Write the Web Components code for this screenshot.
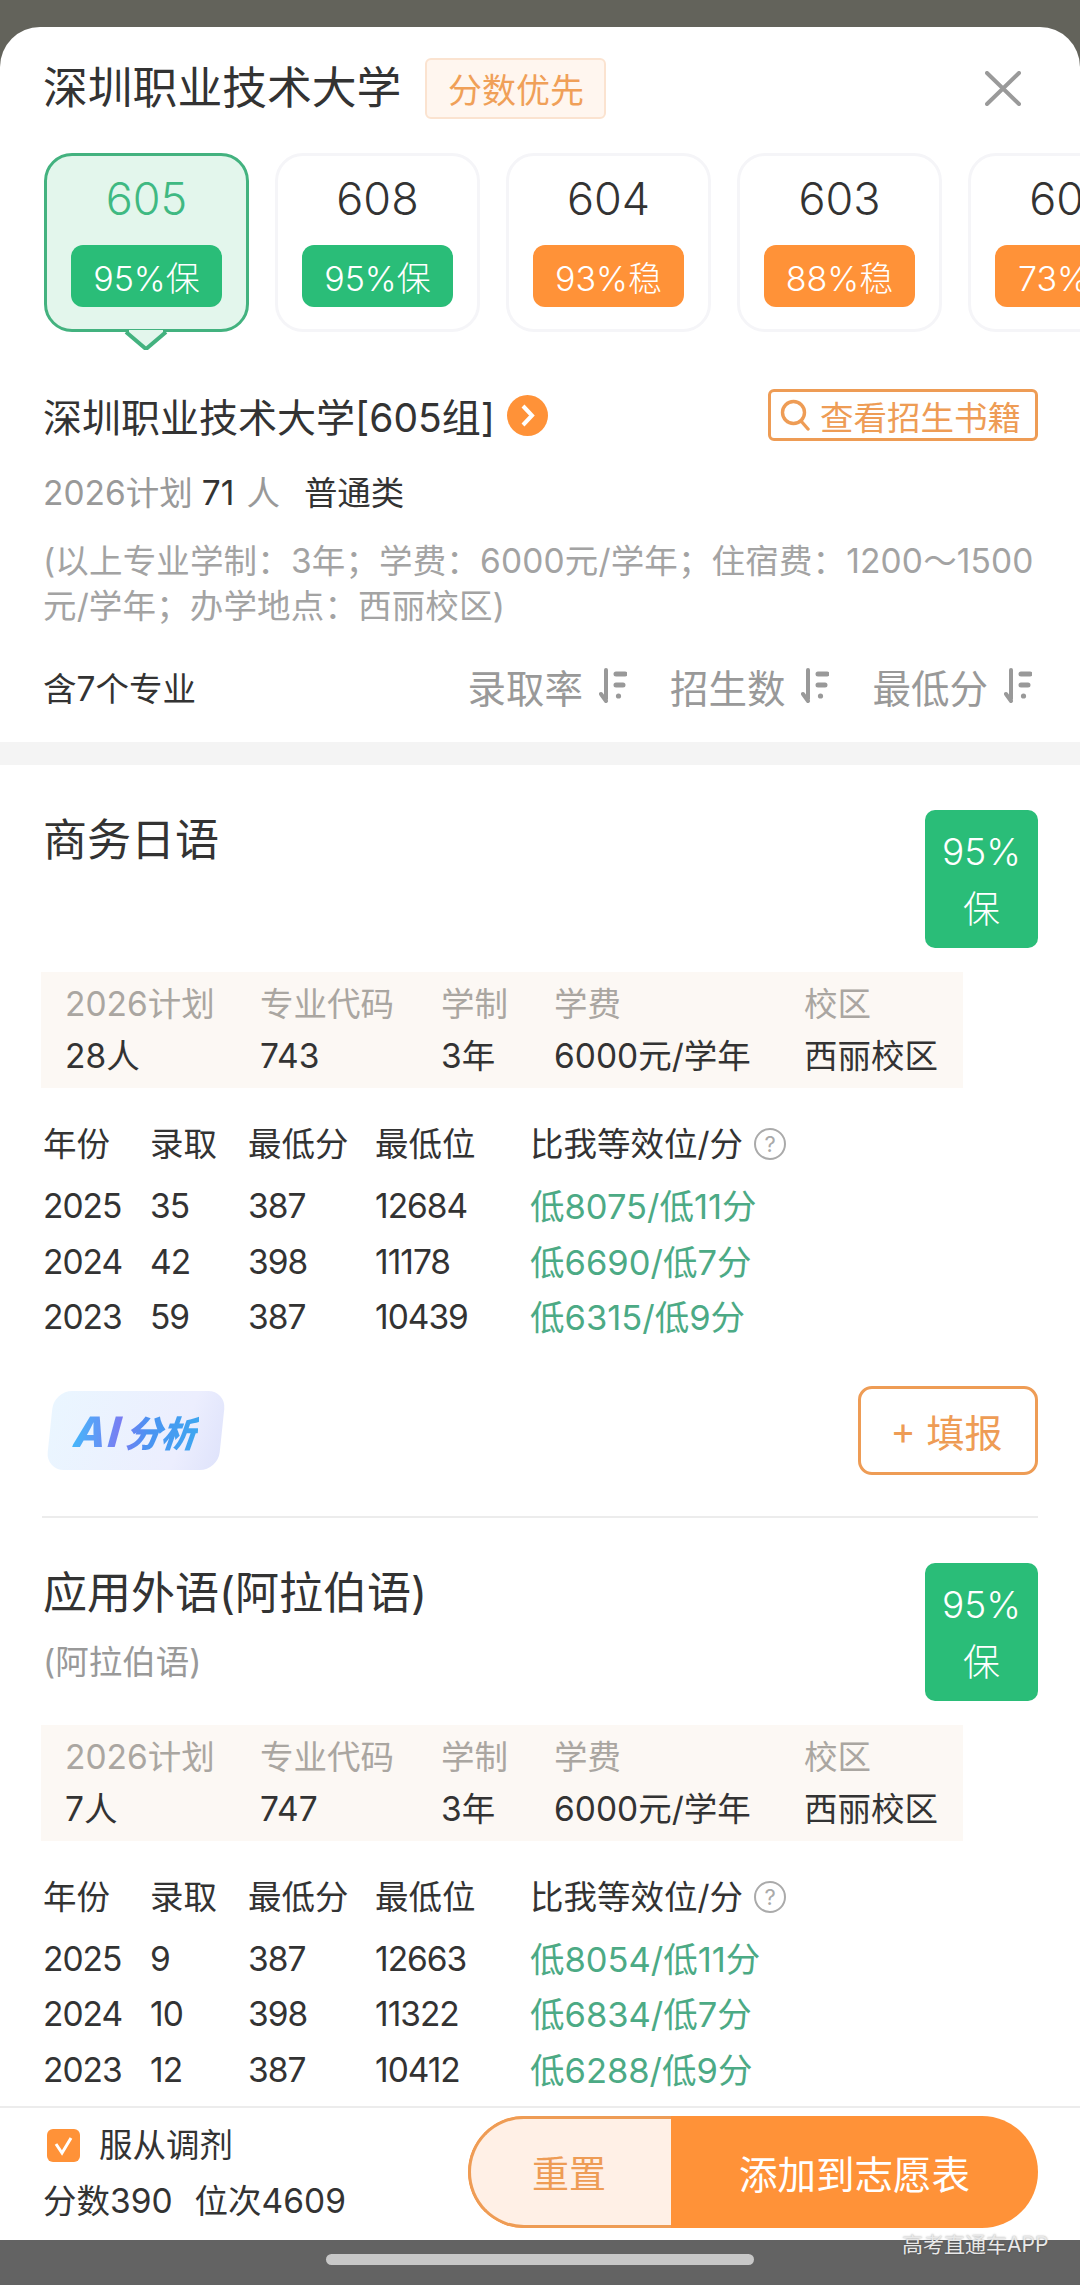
<!DOCTYPE html>
<html lang="zh-CN">
<head>
<meta charset="utf-8">
<title>深圳职业技术大学</title>
<style>
    html, body {
        margin: 0;
        width: 1080px;
        height: 2285px;
        overflow: hidden;
        background: #63635b;
        color: #333;
        font-family: Inter, "Noto Sans CJK SC", sans-serif;
    }
</style>
</head>
<body>

<major-sheet>
    <sheet-header slot="header" title="深圳职业技术大学" tag="分数优先"></sheet-header>

    <score-strip slot="header">
        <score-card score="605" pill="95%保" tone="green" selected></score-card>
        <score-card score="608" pill="95%保" tone="green"></score-card>
        <score-card score="604" pill="93%稳" tone="orange"></score-card>
        <score-card score="603" pill="88%稳" tone="orange"></score-card>
        <score-card score="602" pill="73%稳" tone="orange"></score-card>
    </score-strip>

    <group-summary slot="header"></group-summary>

    <major-card name="商务日语" badge="95%" kind="保" actions>
        <info-cell label="2026计划" value="28人"></info-cell>
        <info-cell label="专业代码" value="743"></info-cell>
        <info-cell label="学制" value="3年"></info-cell>
        <info-cell label="学费" value="6000元/学年"></info-cell>
        <info-cell label="校区" value="西丽校区"></info-cell>
        <score-row slot="rows" cells="2025|35|387|12684|低8075/低11分"></score-row>
        <score-row slot="rows" cells="2024|42|398|11178|低6690/低7分"></score-row>
        <score-row slot="rows" cells="2023|59|387|10439|低6315/低9分"></score-row>
    </major-card>

    <major-card name="应用外语(阿拉伯语)" sub="(阿拉伯语)" badge="95%" kind="保">
        <info-cell label="2026计划" value="7人"></info-cell>
        <info-cell label="专业代码" value="747"></info-cell>
        <info-cell label="学制" value="3年"></info-cell>
        <info-cell label="学费" value="6000元/学年"></info-cell>
        <info-cell label="校区" value="西丽校区"></info-cell>
        <score-row slot="rows" cells="2025|9|387|12663|低8054/低11分"></score-row>
        <score-row slot="rows" cells="2024|10|398|11322|低6834/低7分"></score-row>
        <score-row slot="rows" cells="2023|12|387|10412|低6288/低9分"></score-row>
    </major-card>

    <sheet-footer slot="footer"></sheet-footer>
</major-sheet>

<script>
    (function (customElements) {
        'use strict'

        // base class, every element only has to give its html
        class ShadowElement extends HTMLElement {
            constructor() {
                super();
                this.attachShadow({ mode: 'open' });
            }
            connectedCallback() {
                this.shadowRoot.innerHTML = this.render();
            }
            attr(name) {
                return this.getAttribute(name) || '';
            }
        }

        class MajorSheet extends ShadowElement {
            render() {
                return `
                <style>
                    :host { display: flex; flex-direction: column; height: 2285px; padding-top: 27px; box-sizing: border-box; position: relative; }
                    .panel { flex: 1; min-height: 0; display: flex; flex-direction: column; background: #fff; border-radius: 40px 40px 0 0; overflow: hidden; }
                    .head { flex: none; }
                    .gap { flex: none; height: 23px; background: #f4f4f4; }
                    .list { flex: 1; min-height: 0; overflow: hidden; }
                    .nav { flex: none; height: 45px; background: #636363; display: flex; align-items: center; justify-content: center; }
                    .handle { width: 428px; height: 11px; margin-top: -6px; border-radius: 6px; background: #c8c8c8; }
                    .mark { position: absolute; left: 902px; top: 2231px; font-size: 21px; line-height: 28px; color: #e8e8e8; text-shadow: 0 0 2px rgba(0,0,0,.35); }
                </style>
                <div class="panel">
                    <div class="head"><slot name="header"></slot></div>
                    <div class="gap"></div>
                    <div class="list"><slot></slot></div>
                    <slot name="footer"></slot>
                </div>
                <div class="nav"><div class="handle"></div></div>
                <div class="mark">高考直通车APP</div>
                `;
            }
        }

        class SheetHeader extends ShadowElement {
            render() {
                return `
                <style>
                    :host { display: flex; align-items: center; height: 61px; padding: 31px 59px 0 43px; }
                    h1 { margin: 0; font-size: 44.8px; font-weight: 400; line-height: 61px; color: #333; }
                    .tag { margin-left: 24px; width: 181px; height: 61px; box-sizing: border-box; display: flex; align-items: center; justify-content: center; font-size: 34px; color: #f0a058; background: #fff6ef; border: 2px solid #fbe3d0; border-radius: 6px; }
                    svg { margin-left: auto; display: block; }
                </style>
                <h1>${this.attr('title')}</h1>
                <div class="tag">${this.attr('tag')}</div>
                <svg width="36" height="35" viewBox="0 0 36 35"><path d="M2 2 34 33M34 2 2 33" stroke="#9a9a9a" stroke-width="4" stroke-linecap="round" fill="none"/></svg>
                `;
            }
        }

        class ScoreStrip extends ShadowElement {
            render() {
                return `
                <style>
                    :host { display: flex; gap: 26px; margin-top: 34px; padding-left: 44px; height: 197px; overflow: hidden; }
                </style>
                <slot></slot>
                `;
            }
        }

        class ScoreCard extends ShadowElement {
            render() {
                const selected = this.hasAttribute('selected');
                const arrow = selected ? `<svg class="arrow" width="44" height="22" viewBox="0 0 44 22"><path d="M2 2 22 19 42 2" fill="#e3f6ec" stroke="#43b27f" stroke-width="4"/><path d="M5 0H39V2H5Z" fill="#e3f6ec"/></svg>` : '';
                return `
                <style>
                    :host { flex: none; display: block; position: relative; width: 205px; height: 179px; box-sizing: border-box; }
                    .box { height: 100%; box-sizing: border-box; display: flex; flex-direction: column; align-items: center; padding-top: 15px; border: 3px solid #f5f5f8; border-radius: 28px; background: #fff; }
                    .sel { border-color: #43b27f; background: #e3f6ec; }
                    .score { font-size: 45px; line-height: 56px; font-weight: 300; color: #333; }
                    .sel .score { color: #3fb982; }
                    .pill { margin-top: 18px; width: 151px; height: 62px; display: flex; align-items: center; justify-content: center; border-radius: 12px; font-size: 34px; font-weight: 300; color: #fff; }
                    .green { background: #2abd78; }
                    .orange { background: #ff9238; }
                    .arrow { position: absolute; left: 80px; top: 177px; display: block; }
                </style>
                <div class="box ${selected ? 'sel' : ''}">
                    <div class="score">${this.attr('score')}</div>
                    <div class="pill ${this.attr('tone')}">${this.attr('pill')}</div>
                </div>
                ${arrow}
                `;
            }
        }

        class SortItem extends ShadowElement {
            render() {
                return `
                <style>
                    :host { display: flex; align-items: center; gap: 16px; font-size: 38.5px; color: #999; }
                    svg { display: block; }
                </style>
                <span>${this.attr('label')}</span>
                <svg width="28" height="36" viewBox="0 0 28 36" fill="none" stroke="#999" stroke-linecap="round">
                    <path d="M7 2V31M2 26 7 33" stroke-width="4"/>
                    <path d="M17 6H26M17 17H24" stroke-width="5"/>
                    <circle cx="19.5" cy="28" r="2.6" fill="#999" stroke="none"/>
                </svg>
                `;
            }
        }

        class GroupSummary extends ShadowElement {
            render() {
                return `
                <style>
                    :host { display: block; padding: 39px 42px 26px 43px; font-size: 33.5px; }
                    .title { display: flex; align-items: center; height: 52px; }
                    .title b { font-size: 39px; font-weight: 400; color: #333; }
                    .go { margin-left: 12px; }
                    .book { margin-left: auto; width: 270px; height: 52px; box-sizing: border-box; display: flex; align-items: center; gap: 10px; padding-left: 9px; border: 3px solid #ee9c55; border-radius: 6px; font-size: 33.5px; color: #ee9c55; white-space: nowrap; }
                    svg { display: block; flex: none; }
                    .plan { margin-top: 30px; line-height: 44px; color: #999; display: flex; }
                    .plan em { font-style: normal; color: #333; margin: 0 12px 0 9px; }
                    .plan i { font-style: normal; color: #333; margin-left: 24px; }
                    .note { margin-top: 24px; width: 1000px; letter-spacing: .15px; line-height: 45px; color: #a3a3a3; }
                    .sort { margin-top: 27px; height: 60px; padding-right: 6px; display: flex; align-items: center; }
                    .sort span { color: #333; }
                    .sort sort-item:first-of-type { margin-left: auto; }
                    .sort sort-item + sort-item { margin-left: 43px; }
                </style>
                <div class="title">
                    <b>深圳职业技术大学[605组]</b>
                    <svg class="go" width="41" height="41" viewBox="0 0 41 41"><circle cx="20.5" cy="20.5" r="20.5" fill="#ff9238"/><path d="M16 11 25 20.5 16 30" fill="none" stroke="#fff" stroke-width="4"/></svg>
                    <div class="book">
                        <svg width="30" height="32" viewBox="0 0 30 32" fill="none" stroke="#ee9c55" stroke-width="3.4"><circle cx="13.5" cy="13.5" r="11"/><path d="M21 22 28 30" stroke-linecap="round"/></svg>
                        <span>查看招生书籍</span>
                    </div>
                </div>
                <div class="plan">2026计划<em>71</em>人<i>普通类</i></div>
                <div class="note">(以上专业学制：3年；学费：6000元/学年；住宿费：1200～1500元/学年；办学地点：西丽校区)</div>
                <div class="sort">
                    <span>含7个专业</span>
                    <sort-item label="录取率"></sort-item>
                    <sort-item label="招生数"></sort-item>
                    <sort-item label="最低分"></sort-item>
                </div>
                `;
            }
        }

        class InfoCell extends ShadowElement {
            render() {
                return `
                <style>
                    :host { display: block; font-size: 33.5px; line-height: 52px; white-space: nowrap; }
                    .l { color: #aaa6a1; }
                    .v { color: #333; }
                </style>
                <div class="l">${this.attr('label')}</div>
                <div class="v">${this.attr('value')}</div>
                `;
            }
        }

        class ScoreRow extends ShadowElement {
            render() {
                const cells = this.attr('cells').split('|');
                return `
                <style>
                    :host { display: grid; grid-template-columns: 107px 98px 127px 155px 1fr; font-size: 33.5px; line-height: 55.5px; color: #333; white-space: nowrap; }
                    div { letter-spacing: -1px; }
                    .low { color: #4caa85; font-size: 34.5px; letter-spacing: 0; }
                </style>
                ${cells.map((c, i) => `<div class="${i === 4 ? 'low' : ''}">${c}</div>`).join('')}
                `;
            }
        }

        class MajorCard extends ShadowElement {
            render() {
                const sub = this.attr('sub');
                const actions = this.hasAttribute('actions') ? `
                <div class="acts">
                    <div class="ai"><span><big>AI</big>分析</span></div>
                    <div class="add"><span>+</span><span>填报</span></div>
                </div>` : '';
                return `
                <style>
                    :host { display: block; margin: 0 42px; padding-top: 45px; }
                    .top { display: flex; justify-content: space-between; height: 138px; padding-left: 1px; }
                    h2 { margin: 0; font-size: 44px; font-weight: 400; line-height: 60px; color: #333; }
                    .sub { margin-top: 19px; font-size: 33.5px; line-height: 40px; color: #999; }
                    .badge { width: 113px; height: 138px; padding-top: 13px; box-sizing: border-box; border-radius: 10px; background: #2abd78; color: #fff; font-size: 37px; font-weight: 300; line-height: 58px; text-align: center; }
                    .info { margin: 24px 75px 0 -1px; padding: 6px 0 6px 24px; display: grid; grid-template-columns: 195px 181px 113px 250px 1fr; background: #fcf8f4; }
                    .rows { margin-top: 28px; padding-left: 1px; }
                    .th { display: grid; grid-template-columns: 107px 98px 127px 155px 1fr; font-size: 33.5px; line-height: 56px; color: #333; margin-bottom: 7px; white-space: nowrap; }
                    .th div:last-child { display: flex; align-items: center; gap: 11px; }
                    .q { width: 32px; height: 32px; box-sizing: border-box; border: 2px solid #aaa; border-radius: 50%; display: flex; align-items: center; justify-content: center; font-size: 22px; line-height: 1; color: #aaa; }
                    .acts { margin-top: 40px; padding: 0 0 41px 6px; display: flex; justify-content: space-between; align-items: center; border-bottom: 2px solid #ececec; }
                    .ai { width: 172px; height: 79px; margin-left: 2px; display: flex; align-items: center; justify-content: center; border-radius: 18px; transform: skewX(-6deg); background: linear-gradient(105deg, #eaf6ff, #eceefe 75%, #dfe3fb); }
                    .ai span { font-size: 36px; font-weight: 800; font-style: italic; white-space: nowrap; color: transparent; background: linear-gradient(90deg, #45b6fa, #7a7cf2 38%, #4a93f2 60%, #3fa6f0); -webkit-background-clip: text; background-clip: text; }
                    .ai big { font-size: 42px; letter-spacing: 2px; margin-right: 3px; }
                    .add { width: 180px; height: 89px; box-sizing: border-box; display: flex; align-items: center; justify-content: center; gap: 11px; padding-right: 3px; border: 3px solid #ee9c55; border-radius: 14px; font-size: 38px; color: #ee9c55; }
                </style>
                <div class="top">
                    <div>
                        <h2>${this.attr('name')}</h2>
                        ${sub ? `<div class="sub">${sub}</div>` : ''}
                    </div>
                    <div class="badge">${this.attr('badge')}<br>${this.attr('kind')}</div>
                </div>
                <div class="info"><slot></slot></div>
                <div class="rows">
                    <div class="th"><div>年份</div><div>录取</div><div>最低分</div><div>最低位</div><div>比我等效位/分<span class="q">?</span></div></div>
                    <slot name="rows"></slot>
                </div>
                ${actions}
                `;
            }
        }

        class SheetFooter extends ShadowElement {
            render() {
                return `
                <style>
                    :host { flex: none; display: flex; justify-content: space-between; align-items: flex-start; height: 134px; box-sizing: border-box; padding: 8px 42px 0 43px; background: #fff; border-top: 2px solid #ececec; font-size: 33.5px; color: #333; }
                    .check { display: flex; align-items: center; gap: 19px; margin: 9px 0 0 4px; line-height: 40px; }
                    .box { width: 33px; height: 33px; border-radius: 6px; background: #ff9238; display: block; }
                    .nums { margin-top: 14px; line-height: 44px; display: flex; gap: 22px; }
                    .btns { display: flex; width: 570px; height: 112px; border-radius: 56px; overflow: hidden; background: #ff9238; }
                    .reset { width: 203px; box-sizing: border-box; display: flex; align-items: center; justify-content: center; padding-right: 4px; background: #fff0e6; border: 3px solid #ee9c55; border-right: 0; border-radius: 56px 0 0 56px; font-size: 37px; color: #ee9c55; }
                    .add { flex: 1; display: flex; align-items: center; justify-content: center; font-size: 38.5px; color: #fff; }
                </style>
                <div>
                    <div class="check">
                        <svg class="box" viewBox="0 0 33 33"><path d="M9 15 15 24 24 9" fill="none" stroke="#fff" stroke-width="3"/></svg>
                        <span>服从调剂</span>
                    </div>
                    <div class="nums"><span>分数390</span><span>位次4609</span></div>
                </div>
                <div class="btns">
                    <div class="reset">重置</div>
                    <div class="add">添加到志愿表</div>
                </div>
                `;
            }
        }

        customElements.define('major-sheet', MajorSheet);
        customElements.define('sheet-header', SheetHeader);
        customElements.define('score-strip', ScoreStrip);
        customElements.define('score-card', ScoreCard);
        customElements.define('sort-item', SortItem);
        customElements.define('group-summary', GroupSummary);
        customElements.define('info-cell', InfoCell);
        customElements.define('score-row', ScoreRow);
        customElements.define('major-card', MajorCard);
        customElements.define('sheet-footer', SheetFooter);

    })(window.customElements);
</script>
</body>
</html>
